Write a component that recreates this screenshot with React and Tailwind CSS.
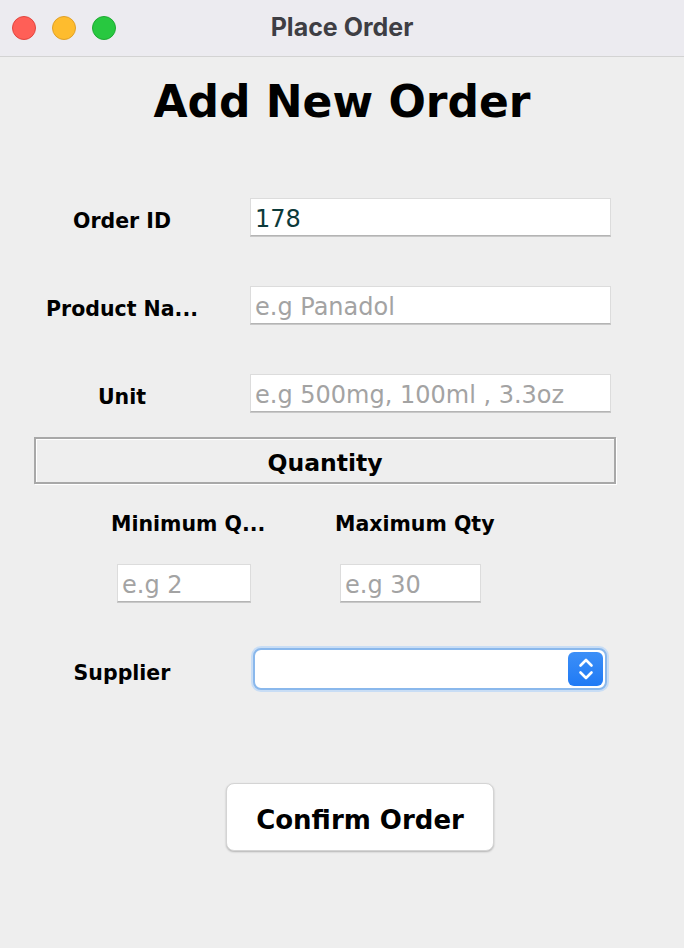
const labelFont = { fontFamily: '"DejaVu Sans", "Liberation Sans", sans-serif' };

function Field({ value, placeholder, className = "" }) {
  return (
    <div
      className={`h-[38px] bg-white border border-[#dcdcdc] border-b-[#b4b4b4] shadow-[0_1px_0_#c8c8c8] flex items-center px-[4px] pt-[4px] text-[24px] ${className}`}
    >
      {value ? (
        <span className="text-[#0c3a3a]">{value}</span>
      ) : (
        <span className="text-[#a3a3a3]">{placeholder}</span>
      )}
    </div>
  );
}

function Row({ label, children, className = "" }) {
  return (
    <div className={`flex items-center h-[38px] ${className}`}>
      <div className="w-[244px] pt-[8px] leading-[30px] text-center font-bold text-[20.5px] text-black">{label}</div>
      <div className="ml-[6px]">{children}</div>
    </div>
  );
}

export default function App() {
  return (
    <div className="w-[684px] h-[948px] bg-[#eeeeee] flex flex-col overflow-hidden" style={labelFont}>
      {/* title bar */}
      <div className="h-[57px] bg-[#ecebf0] border-b border-[#d3d3d3] flex items-center relative shrink-0">
        <div className="flex gap-[16px] pl-[12px]">
          <span className="w-[24px] h-[24px] rounded-full bg-[#ff5f57] border border-[#e1463f]" />
          <span className="w-[24px] h-[24px] rounded-full bg-[#febc2e] border border-[#e0a028]" />
          <span className="w-[24px] h-[24px] rounded-full bg-[#28c840] border border-[#1eaa32]" />
        </div>
        <div
          className="absolute inset-x-0 text-center text-[25px] font-bold text-[#3e3e44] pointer-events-none"
          style={{ fontFamily: 'Inter, "Liberation Sans", sans-serif' }}
        >
          Place Order
        </div>
      </div>

      {/* heading */}
      <h1 className="mt-[20px] text-center font-bold text-[44px] leading-[50px] text-black">Add New Order</h1>

      <Row label="Order ID" className="mt-[71px]">
        <Field value="178" className="w-[361px]" />
      </Row>
      <Row label="Product Na..." className="mt-[50px]">
        <Field placeholder="e.g Panadol" className="w-[361px]" />
      </Row>
      <Row label="Unit" className="mt-[50px]">
        <Field placeholder="e.g 500mg, 100ml , 3.3oz" className="w-[361px]" />
      </Row>

      {/* quantity section */}
      <div className="mt-[25px] ml-[34px] w-[582px] h-[47px] pt-[6px] border-2 border-[#a8a8a8] shadow-[inset_1px_1px_0_#ffffff,1px_1px_0_#ffffff] flex items-center justify-center font-bold text-[23.5px] text-black">
        Quantity
      </div>

      <div className="flex mt-[26px] pl-[111px] font-bold text-[20.5px] text-black leading-[28px]">
        <div className="w-[224px]">Minimum Q...</div>
        <div>Maximum Qty</div>
      </div>

      <div className="flex mt-[26px] pl-[117px]">
        <Field placeholder="e.g 2" className="w-[134px]" />
        <Field placeholder="e.g 30" className="w-[141px] ml-[89px]" />
      </div>

      {/* supplier */}
      <div className="flex items-center mt-[46px]">
        <div className="w-[244px] pt-[8px] text-center font-bold text-[20.5px] text-black">Supplier</div>
        <div className="ml-[9px] w-[354px] h-[42px] rounded-[8px] bg-white border-[2px] border-[#8ab8ec] shadow-[0_0_0_2px_#c8ddf5] flex items-center justify-end pr-[2px]">
          <div className="w-[35px] h-[34px] rounded-[6px] bg-gradient-to-b from-[#3c8ff7] to-[#1f7af5] flex items-center justify-center">
            <svg width="18" height="26" viewBox="0 0 18 26" fill="none" stroke="white" strokeWidth="2.6" strokeLinecap="round" strokeLinejoin="round">
              <path d="M3.5 9.5 L9 4 L14.5 9.5" />
              <path d="M3.5 16.5 L9 22 L14.5 16.5" />
            </svg>
          </div>
        </div>
      </div>

      {/* confirm */}
      <div className="flex justify-center mt-[93px] pl-[36px]">
        <button className="w-[268px] h-[68px] pt-[6px] rounded-[8px] bg-white border border-[#d4d4d4] shadow-[0_1px_2px_rgba(0,0,0,0.25)] font-bold text-[26px] text-black">
          Confirm Order
        </button>
      </div>
    </div>
  );
}
